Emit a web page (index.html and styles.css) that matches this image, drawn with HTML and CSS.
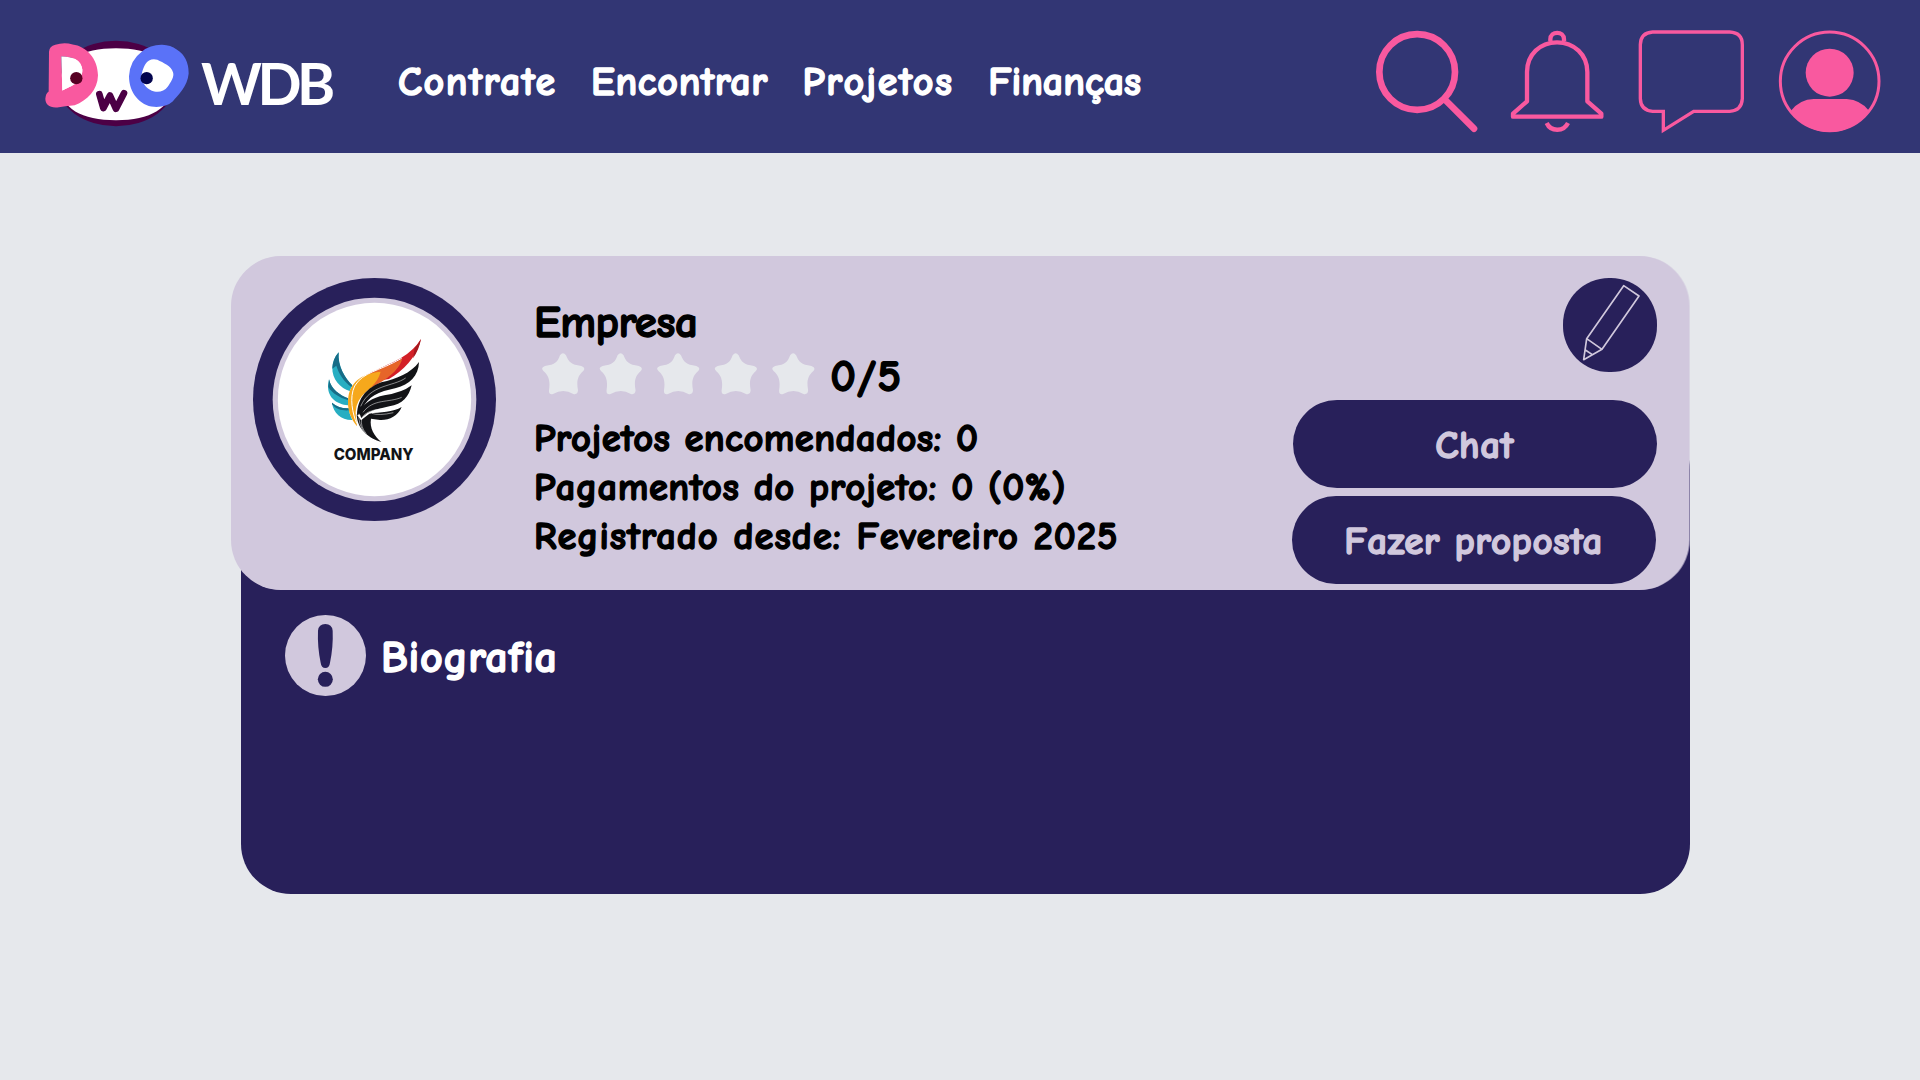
FILE: index.html
```html
<!DOCTYPE html>
<html lang="pt-BR">
<head>
<meta charset="utf-8">
<title>WDB</title>
<link rel="stylesheet" href="styles.css">
</head>
<body>
<header class="topbar">
  <a class="brand">
    <svg class="brand-logo" viewBox="45 60 435 260">
      <ellipse cx="258" cy="190" rx="176" ry="128" fill="#4c0045"/>
      <path d="M90 192C90 120 155 84 258 84S426 120 426 192 360 300 258 300 90 265 90 192Z" fill="#fff"/>
      <path fill="#f9599f" fill-rule="evenodd" d="M57 95Q58 78 76 74Q102 65 128 73C168 78 204 115 204 165C203 210 172 240 134 255Q104 258 82 262C58 264 46 252 46 236Q47 220 56 214ZM94 109L97 211C125 198 158 185 157 148C154 117 122 108 94 109Z"/>
      <path d="M94 109L97 211C125 198 158 185 157 148C154 117 122 108 94 109Z" fill="#fff"/>
      <path fill="#5a72f8" d="M336 94Q362 73 397 74Q422 75 440 88Q476 110 476 160C472 200 446 222 428 244Q408 262 372 260C330 256 297 218 297 168Q300 120 336 94Z"/>
      <path fill="#fff" d="M346 132C354 118 370 114 382 119C400 128 424 138 429 156C434 170 422 186 413 200C404 213 388 217 373 214C352 208 340 194 336 178C332 164 338 146 346 132Z"/>
      <circle cx="139" cy="174" r="18.500" fill="#560023"/>
      <circle cx="350" cy="174" r="18.500" fill="#03044e"/>
      <path d="M208 222L220 264L240 226L258 266L282 219" fill="none" stroke="#4c0045" stroke-width="20" stroke-linecap="round" stroke-linejoin="round"/>
    </svg>
    <span class="brand-name">WDB</span>
  </a>
  <nav class="menu">
    <a class="m1">Contrate</a>
    <a class="m2">Encontrar</a>
    <a class="m3">Projetos</a>
    <a class="m4">Finanças</a>
  </nav>
  <div class="tools">
    <svg class="tool tool-search" viewBox="45 30 306 306" fill="none" stroke="#f9599f">
      <circle cx="171.500" cy="156" r="113.500" stroke-width="20"/>
      <path d="M256 240L342 326" stroke-width="20" stroke-linecap="round"/>
    </svg>
    <svg class="tool tool-bell" viewBox="453 30 281 306" fill="none" stroke="#f9599f" stroke-width="13" stroke-linejoin="round">
      <path d="M501 244V156C501 104 540 67 591 67S682 104 682 156V244L724 281V290H459V281Z"/>
      <path d="M571 64V58C571 32 612 32 612 58V64"/>
      <path d="M560 309C572 336 611 336 624 309"/>
    </svg>
    <svg class="tool tool-chat" viewBox="58 30 318 306" fill="none" stroke="#f9599f" stroke-width="10">
      <path d="M99 36H330Q368 38 368 74V236Q366 272 330 274H222L131 331V274H99Q63 271 62 236V74Q63 38 99 36Z"/>
    </svg>
    <svg class="tool tool-user" viewBox="477 30 306 306" fill="#f9599f">
      <circle cx="629" cy="184" r="148" fill="none" stroke="#f9599f" stroke-width="9"/>
      <circle cx="629" cy="158" r="72"/>
      <path d="M513 272Q540 238 581 237H680Q722 240 747 272C718 312 677 336 629 336S538 312 513 272Z"/>
    </svg>
  </div>
</header>

<main class="profile">
  <section class="card">
    <svg class="avatar" viewBox="99 84 729 729">
      <circle cx="463.500" cy="448.500" r="364.500" fill="#28205a"/>
      <circle cx="463.500" cy="448.500" r="305.500" fill="#d1c8dd"/>
      <circle cx="463.500" cy="448.500" r="290" fill="#fff"/>
      <path fill="#27aec2" d="M356 307C352 348 376 386 397 406L389 423C363 414 335 390 337 350Q340 326 356 307Z"/>
      <path fill="#176c87" d="M356 307C352 348 376 386 397 406L394 411C370 393 356 370 349 347L337 356Q338 327 356 307Z"/>
      <path fill="#27aec2" d="M327 388C334 420 360 435 384 445V466C352 463 323 446 324 406Z"/>
      <path fill="#176c87" d="M327 388C334 420 360 435 384 445V450C358 443 338 431 325 411Z"/>
      <path fill="#27aec2" d="M336 458C351 471 367 476 386 475Q388 494 397 510C364 511 340 490 336 458Z"/>
      <path fill="#176c87" d="M336 458C351 471 367 476 386 475L387 481C365 482 349 479 336 463Z"/>
      <path fill="#d32027" d="M603 267C590 324 548 362 507 387L447 397L425 387C450 365 520 338 544 323Q581 302 603 267Z"/>
      <path fill="#a5181f" d="M603 267Q597 300 579 325L584 294Q595 282 603 267Z"/>
      <path fill="#e66529" d="M547 326C532 374 478 398 443 420L413 448L408 401C441 360 502 352 547 326Z"/>
      <path fill="#f6a81c" d="M482 365C472 403 443 418 424 440Q403 466 408 502L411 529C392 505 380 478 385 440C394 389 434 370 482 365Z"/>
      <path fill="none" stroke="#fff" stroke-width="3" d="M545 325C475 365 430 365 404 408C387 444 398 491 410 520"/>
      <path fill="#121316" d="M597 336C596 379 568 403 528 414L492 423C447 437 430 463 422 493L411 495C413 440 445 412 484 397C530 387 573 369 597 336Z"/>
      <path fill="#121316" d="M575 406C567 440 548 463 508 469L465 479Q440 486 424 505L417 486C432 459 456 444 493 436Q547 428 575 406Z"/>
      <path fill="#121316" d="M545 471C533 499 508 511 480 510L453 506C448 535 463 557 484 576C449 566 411 540 410 493L423 511L448 491C480 486 520 487 545 471Z"/>
      <g fill="none" stroke="#fff" stroke-width="1.500">
        <path d="M557 384C518 411 451 402 422 469"/>
        <path d="M545 442C506 459 460 445 429 487"/>
        <path d="M548 468C508 480 445 469 425 504Q420 530 439 551"/>
        <path d="M520 488Q476 498 456 490"/>
        <path d="M417 491Q414 522 434 549"/>
      </g>
      <text class="avatar-name" x="461" y="629" text-anchor="middle" textLength="240" lengthAdjust="spacingAndGlyphs">COMPANY</text>
    </svg>

    <div class="info">
      <h1 class="name">Empresa</h1>
      <div class="rating">
        <svg class="stars" viewBox="66 188 820 126">
          <defs><path id="star" d="M120 195Q129 183 138 195C146 215 153 223 184 227Q199 232 189 243C173 257 169 273 174 300Q173 314 160 311Q130 293 99 311Q86 314 87 300C91 273 87 257 71 243Q60 232 75 227C106 223 113 215 120 195Z"/></defs>
          <g fill="#e6e8ec"><use href="#star"/><use href="#star" x="172.700"/><use href="#star" x="345"/><use href="#star" x="518"/><use href="#star" x="690.500"/></g>
        </svg>
        <span class="score">0/5</span>
      </div>
      <ul class="stats">
        <li class="s1">Projetos encomendados: 0</li>
        <li class="s2">Pagamentos do projeto: 0 (0%)</li>
        <li class="s3">Registrado desde: Fevereiro 2025</li>
      </ul>
    </div>

    <div class="actions">
      <a class="edit">
        <svg class="pencil" viewBox="877 84 282 282" fill="none" stroke="#d1c8dd" stroke-width="5" stroke-linejoin="round">
          <path d="M1059 107L1105 138L994 298L939 329L948 266ZM948 266L994 298M944 300L965 314"/>
        </svg>
      </a>
      <a class="button">Chat</a>
      <a class="button button-offer">Fazer proposta</a>
    </div>
  </section>

  <section class="bio">
    <svg class="bio-icon" viewBox="195 195 243 243">
      <circle cx="316.500" cy="316.500" r="121.500" fill="#d1c8dd"/>
      <path fill="#28205a" d="M294 242Q296 222 316 222T338 242Q340 290 330 338Q328 354 316 354T302 338Q292 290 294 242Z"/>
      <circle cx="316" cy="388" r="22.500" fill="#28205a"/>
    </svg>
    <h2 class="bio-title">Biografia</h2>
  </section>
</main>
</body>
</html>
```
FILE: styles.css
```css
* { box-sizing: border-box; }

body {
  margin: 0;
  height: 1080px;
  overflow: hidden;
  background: #e6e8ec;
  font-family: "Comic Sans MS", "Comic Neue", Inter, sans-serif;
  font-feature-settings: "cv11";
  font-weight: 600;
  -webkit-text-stroke: 1.4px currentColor;
}

h1, h2, ul { margin: 0; padding: 0; list-style: none; font-weight: 600; }
svg { display: block; flex: none; }

.topbar {
  display: flex;
  height: 153px;
  padding: 0 39px 0 45px;
  background: #323674;
  color: #fff;
}

.brand { display: flex; width: 353px; padding-top: 40px; }
.brand-logo { width: 145px; height: 87px; }
.brand-name {
  margin-left: 11px;
  font: 700 58px/85px Lato, sans-serif;
  letter-spacing: -4.5px;
  -webkit-text-stroke: 0;
}

.menu {
  display: flex;
  gap: 34.5px;
  padding-top: 59px;
  font-size: 40px;
  line-height: 46px;
  white-space: nowrap;
}
.m1 { letter-spacing: 1.5px; }
.m2 { letter-spacing: 0.65px; }
.m3 { letter-spacing: 1.6px; }
.m4 { letter-spacing: 0; }

.tools { display: flex; gap: 34px; margin-left: auto; padding-top: 30px; }
.tool { height: 102px; overflow: visible; }
.tool-search, .tool-user { width: 102px; }
.tool-bell { width: 93.7px; }
.tool-chat { width: 106px; }

.profile { display: flex; flex-direction: column; width: 1459px; margin: 103px 0 0 231px; }

.card {
  z-index: 1;
  display: flex;
  height: 334px;
  margin-right: 1px;
  padding: 22px 32.5px 0 22px;
  border-radius: 50px;
  background: #d1c8dd;
  box-shadow: 1px 0 0 rgba(209, 200, 221, 0.6);
}

.avatar { width: 243px; height: 243px; }
.avatar-name {
  font: 800 49px Inter, sans-serif;
  fill: #121316;
  -webkit-text-stroke: 0;
}

.info { padding: 18px 0 0 38px; color: #000; white-space: nowrap; }
.name { font-size: 45px; line-height: 52px; letter-spacing: -0.5px; }
.rating { display: flex; align-items: center; gap: 15px; height: 54px; padding-left: 8px; }
.stars { width: 273.300px; height: 42px; margin-top: -3px; }
.score { padding-top: 2px; font-size: 45px; line-height: 52px; letter-spacing: 0.8px; }
.stats { padding-top: 12px; font-size: 38.5px; line-height: 49px; }
.s1 { letter-spacing: 0.4px; }
.s2 { letter-spacing: 0.55px; }
.s3 { letter-spacing: 1px; }

.actions { display: flex; flex-direction: column; align-items: flex-end; margin-left: auto; }
.edit { width: 94px; height: 94px; margin-bottom: 28px; border-radius: 46px; background: #28205a; }
.pencil { width: 94px; height: 94px; }
.button {
  display: flex;
  align-items: center;
  justify-content: center;
  width: 364px;
  height: 88px;
  padding-top: 2px;
  border-radius: 44px;
  background: #28205a;
  color: #d1c8dd;
  font-size: 39px;
  letter-spacing: 0.5px;
  white-space: nowrap;
}
.button-offer { margin: 8px 1px 0 0; }

.bio {
  display: flex;
  height: 474px;
  margin: -170px 0 0 10px;
  padding: 195px 44px 0;
  border-radius: 50px;
  background: #28205a;
  color: #fff;
}
.bio-icon { width: 81px; height: 81px; }
.bio-title { margin-left: 15px; font-size: 44px; line-height: 85px; letter-spacing: 0.7px; }
```
